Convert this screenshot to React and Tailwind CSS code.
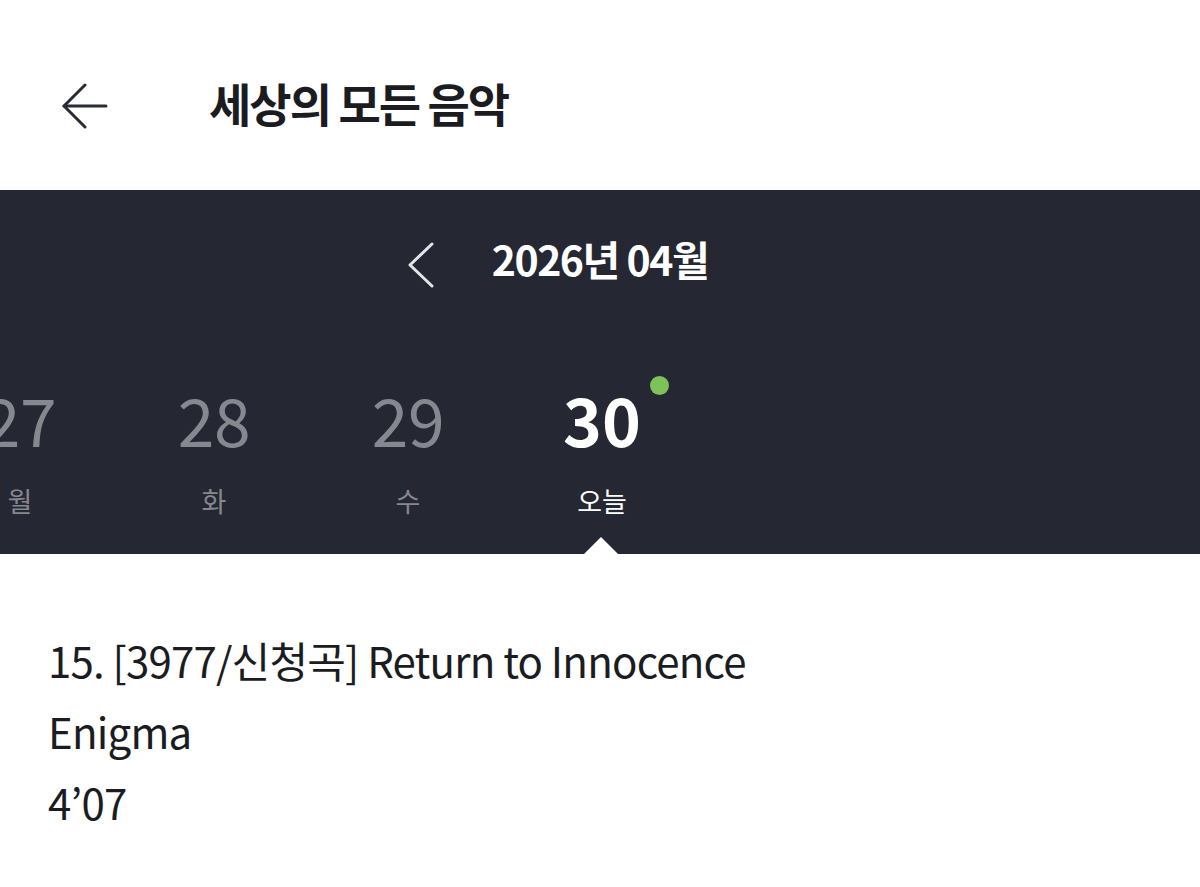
import React from "react";

const days = [
  { n: "27", d: "월" },
  { n: "28", d: "화" },
  { n: "29", d: "수" },
  { n: "30", d: "오늘", active: true },
];

export default function App() {
  const font = { fontFamily: '"Noto Sans CJK KR", "Noto Sans", sans-serif' };
  return (
    <div className="w-[1200px] h-[887px] bg-white overflow-hidden" style={font}>
      <header className="h-[190px] flex items-center pl-[62px] pt-[22px]">
        <svg width="46" height="46" viewBox="0 0 46 46" fill="none" stroke="#2a2c35" strokeWidth="3" strokeLinecap="round" strokeLinejoin="round">
          <path d="M2 23 H44" />
          <path d="M23 2 L2 23 L23 44" />
        </svg>
        <h1 className="ml-[101px] mb-[8px] text-[46px] font-bold tracking-[-2px] text-[#1b1c22] leading-none">세상의 모든 음악</h1>
      </header>
      <section className="relative h-[364px] bg-[#252733] overflow-hidden">
        <div className="flex items-center justify-center pt-[52px]">
          <svg width="26" height="46" viewBox="0 0 26 46" fill="none" stroke="#e4e5e9" strokeWidth="3" strokeLinecap="round" strokeLinejoin="round">
            <path d="M24 2 L2 23 L24 44" />
          </svg>
          <div className="mx-[58px] -translate-y-[7px] text-[41px] font-bold tracking-[-1.5px] text-white leading-none">2026년 04월</div>
          <div className="w-[26px]" />
        </div>
        <div className="flex ml-[-77px] mt-[97px]">
          {days.map((x) => (
            <div key={x.n} className="w-[194px] shrink-0 flex flex-col items-center">
              <div className="relative">
                <div className={`text-[66px] leading-none ${x.active ? "font-bold text-white tracking-[0px]" : "font-normal text-[#86888f] tracking-[-0.5px]"}`}>{x.n}</div>
                {x.active && <span className="absolute right-[-28px] top-[-9px] w-[19px] h-[19px] rounded-full bg-[#7cc45a]" />}
              </div>
              <div className={`mt-[36px] text-[27px] leading-none ${x.active ? "text-white" : "text-[#86888f]"}`}>{x.d}</div>
            </div>
          ))}
        </div>
        <div className="absolute bottom-0 left-[584px] w-0 h-0 border-l-[17px] border-r-[17px] border-b-[17px] border-l-transparent border-r-transparent border-b-white" />
      </section>
      <div className="pl-[48px] pt-[70px] text-[42px] leading-[71px] tracking-[-0.8px] text-[#1b1c22]">
        <div>15. [3977/신청곡] Return to Innocence</div>
        <div>Enigma</div>
        <div>4’07</div>
      </div>
    </div>
  );
}
